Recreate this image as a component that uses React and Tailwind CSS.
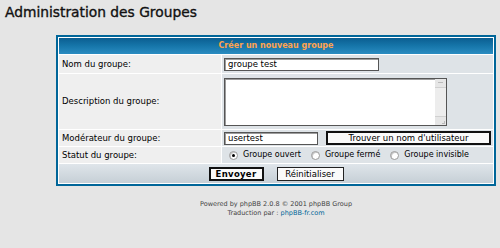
import React from 'react';

const font = "font-['DejaVu_Sans','Verdana',sans-serif]";

const Radio = ({ checked }) => (
  <span className="inline-flex w-[9px] h-[9px] rounded-full bg-white border border-[#9a9a9a] items-center justify-center shadow-[inset_1px_1px_0_#c8c8c8]">
    {checked && <span className="w-[3px] h-[3px] rounded-full bg-black" />}
  </span>
);

const App = () => {
  return (
    <div className={`w-[500px] h-[248px] bg-[#e5e5e5] text-black ${font} overflow-hidden`}>
      {/* TITLE */}
      <h1 className="pl-[5px] pt-[3px] h-[35px] text-[13.8px] leading-[18px] text-[#111] [-webkit-text-stroke:0.35px_#111]">
        Administration des Groupes
      </h1>

      {/* FORM TABLE */}
      <table className="ml-[56px] w-[440px] bg-white border-2 border-[#006699] border-separate border-spacing-[1px] text-[8.5px]">
        <tbody>
          <tr>
            <th colSpan={2} className="h-[16px] p-0 bg-gradient-to-b from-[#0b5e91] via-[#1676aa] to-[#2a8cc1] text-[#ffa34f] font-bold text-[8px] text-center">
              Créer un nouveau groupe
            </th>
          </tr>
          <tr>
            <td className="w-[165px] h-[18px] bg-[#efefef] px-[3px] py-0">Nom du groupe:</td>
            <td className="bg-[#dee3e7] px-[2px] py-0">
              <div className="w-[155px] h-[13px] bg-white border border-[#555] shadow-[inset_1px_1px_0_#9c9c9c] pl-[3px] leading-[11px]">groupe test</div>
            </td>
          </tr>
          <tr>
            <td className="h-[55px] bg-[#efefef] px-[3px] py-0">Description du groupe:</td>
            <td className="bg-[#dee3e7] px-[2px] py-0">
              <div className="w-[223px] h-[48px] bg-white border border-[#555] shadow-[inset_1px_1px_0_#9c9c9c] flex justify-end">
                <div className="w-[11px] h-full bg-[#ededed] flex flex-col justify-between">
                  <div className="h-[9px] bg-[#e6e6e6] border-b border-[#d0d0d0] flex items-center justify-center">
                    <span className="w-[5px] h-px bg-[#bbb]" />
                  </div>
                  <div className="h-[9px] bg-[#e6e6e6] border-t border-[#d0d0d0] flex items-end justify-end pr-[1px] pb-[1px]">
                    <span className="w-[3px] h-[3px] border-r border-b border-[#bbb]" />
                  </div>
                </div>
              </div>
            </td>
          </tr>
          <tr>
            <td className="h-[16px] bg-[#efefef] px-[3px] py-0">Modérateur du groupe:</td>
            <td className="bg-[#dee3e7] px-[2px] py-0">
              <div className="flex items-center gap-[8px]">
                <div className="w-[94px] h-[13px] bg-white border border-[#555] shadow-[inset_1px_1px_0_#9c9c9c] pl-[3px] leading-[11px]">usertest</div>
                <div className="w-[165px] h-[14px] bg-[#fafafa] border-2 border-[#111] text-center leading-[10px]">Trouver un nom d'utilisateur</div>
              </div>
            </td>
          </tr>
          <tr>
            <td className="h-[16px] bg-[#efefef] px-[3px] py-0">Statut du groupe:</td>
            <td className="bg-[#dee3e7] pl-[7px] py-0">
              <div className="flex items-center text-[8px]">
                <Radio checked />
                <span className="ml-[5px] mr-[10px]">Groupe ouvert</span>
                <Radio />
                <span className="ml-[5px] mr-[10px]">Groupe fermé</span>
                <Radio />
                <span className="ml-[5px]">Groupe invisible</span>
              </div>
            </td>
          </tr>
          <tr>
            <td colSpan={2} className="h-[19px] p-0 bg-gradient-to-b from-[#dfe5ea] to-[#c6cfd6]">
              <div className="flex justify-center items-center gap-[13px]">
                <div className="w-[55px] h-[14px] bg-[#fafafa] border-2 border-[#111] font-bold text-center leading-[10px] tracking-[0.3px]">Envoyer</div>
                <div className="w-[67px] h-[14px] bg-[#fafafa] border border-[#222] text-center leading-[12px]">Réinitialiser</div>
              </div>
            </td>
          </tr>
        </tbody>
      </table>

      {/* FOOTER */}
      <div className="ml-[56px] w-[440px] mt-[14px] text-center text-[6.5px] leading-[9px] text-[#444]">
        <div>Powered by phpBB 2.0.8 © 2001 phpBB Group</div>
        <div>Traduction par : <span className="text-[#006699]">phpBB-fr.com</span></div>
      </div>
    </div>
  );
};

export default App;
